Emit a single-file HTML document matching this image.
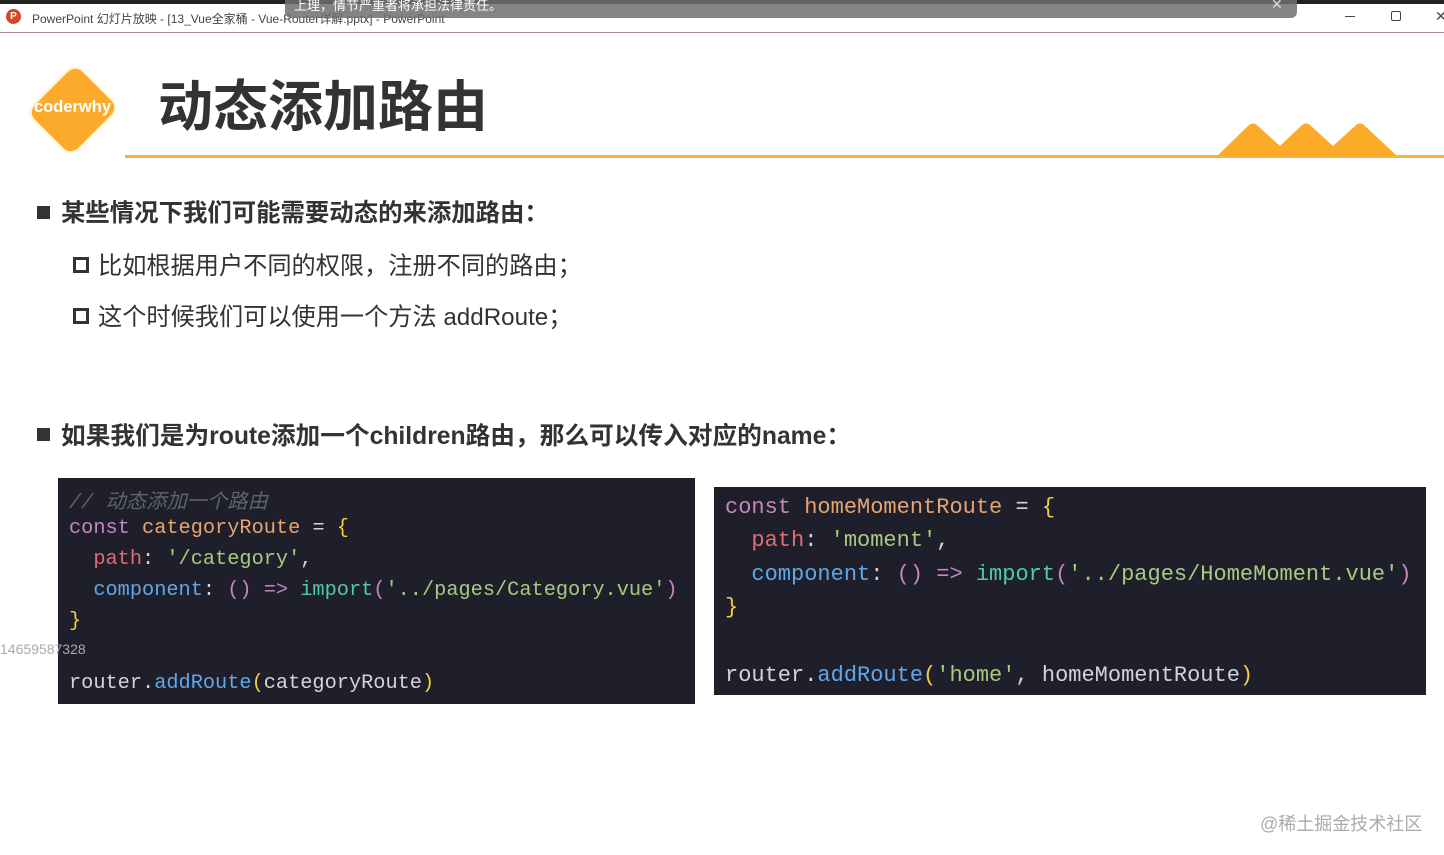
<!DOCTYPE html>
<html><head><meta charset="utf-8"><style>
*{margin:0;padding:0;box-sizing:border-box}
body{width:1444px;height:855px;background:#fff;position:relative;overflow:hidden;font-family:"Liberation Sans","Noto Sans CJK SC",sans-serif}
.abs{position:absolute;white-space:nowrap}
.code{font-family:"Liberation Mono","DejaVu Sans Mono",monospace;position:absolute;background:#1e1f2b;}
.code div{position:absolute;white-space:pre;left:11px}
.k{color:#c586c0}.v{color:#e5a56e}.y{color:#f3d038}.p{color:#e06c75}.b{color:#5fa8e8}.s{color:#a8c97f}.w{color:#d4d4d4}.c{color:#5f6370;font-style:italic}.t{color:#4ec9b0}.g{color:#777}
</style></head><body>
<div class="abs" style="left:0;top:0;width:1444px;height:4px;background:#222"></div>
<div class="abs" style="left:0;top:32px;width:1444px;height:1px;background:#b08a8a"></div>
<div class="abs" style="left:6px;top:9px;width:15px;height:15px;border-radius:50%;background:#d24726;color:#fff;font-size:10px;font-weight:bold;text-align:center;line-height:15px">P</div>
<div class="abs" style="left:32px;top:10px;font-size:12px;color:#444">PowerPoint 幻灯片放映 - [13_Vue全家桶 - Vue-Router详解.pptx] - PowerPoint</div>
<div class="abs" style="left:285px;top:0;width:1012px;height:18px;background:rgba(110,110,110,.85);border-radius:0 0 6px 6px"></div>
<div class="abs" style="left:294px;top:-5px;font-size:13px;color:#fff">上理，情节严重者将承担法律责任。</div>
<div class="abs" style="left:1271px;top:-4px;font-size:14px;color:#ddd">✕</div>
<div class="abs" style="left:1345px;top:16px;width:10px;height:1px;background:#444"></div>
<div class="abs" style="left:1391px;top:11px;width:10px;height:10px;border:1px solid #444;border-radius:2px"></div>
<div class="abs" style="left:1435px;top:8px;font-size:14px;color:#444">✕</div>
<div class="abs" style="left:41px;top:78px;width:64px;height:64px;background:#fcaa2c;transform:rotate(45deg) scale(0.95,1.05);border-radius:10px;box-shadow:0 0 4px #fdd77a"></div>
<div class="abs" style="left:34px;top:98px;font-size:16.5px;font-weight:bold;color:#fff">coderwhy</div>
<div class="abs" style="left:158px;top:62px;font-size:55px;font-weight:bold;color:#333">动态添加路由</div>
<div class="abs" style="left:125px;top:155px;width:1319px;height:3px;background:#fbb040"></div>
<svg class="abs" style="left:1210px;top:118px" width="200" height="40"><path d="M7 38 L38 8 Q43 3 48 8 L70 28 L91 8 Q96 3 101 8 L123 28 L145 8 Q150 3 155 8 L187 38 Z" fill="#fbab27"/></svg>
<div class="abs" style="left:37px;top:206px;width:13px;height:13px;background:#333"></div>
<div class="abs" style="left:61px;top:194px;font-size:24.4px;font-weight:bold;color:#333">某些情况下我们可能需要动态的来添加路由：</div>
<div class="abs" style="left:73px;top:257px;width:16px;height:16px;border:3px solid #333"></div>
<div class="abs" style="left:98px;top:246px;font-size:24.2px;color:#333">比如根据用户不同的权限，注册不同的路由；</div>
<div class="abs" style="left:73px;top:308px;width:16px;height:16px;border:3px solid #333"></div>
<div class="abs" style="left:98px;top:297px;font-size:24.2px;color:#333">这个时候我们可以使用一个方法 addRoute；</div>
<div class="abs" style="left:37px;top:428px;width:13px;height:13px;background:#333"></div>
<div class="abs" style="left:61px;top:416px;font-size:24.7px;font-weight:bold;color:#333">如果我们是为route添加一个children路由，那么可以传入对应的name：</div>
<div class="code" style="left:58px;top:478px;width:637px;height:226px;font-size:20.3px">
<div class="c" style="top:6px">// 动态添加一个路由</div>
<div style="top:39px"><span class="k">const</span> <span class="v">categoryRoute</span> <span class="w">=</span> <span class="y">{</span></div>
<div style="top:70px">  <span class="p">path</span><span class="w">:</span> <span class="s">'/category'</span><span class="w">,</span></div>
<div style="top:101px">  <span class="b">component</span><span class="w">:</span> <span class="k">()</span> <span class="k">=&gt;</span> <span class="t">import</span><span class="k">(</span><span class="s">'../pages/Category.vue'</span><span class="k">)</span></div>
<div style="top:132px"><span class="y">}</span></div>
<div style="top:194px"><span class="w">router.</span><span class="b">addRoute</span><span class="y">(</span><span class="w">categoryRoute</span><span class="y">)</span></div>
</div>
<div class="abs" style="left:0;top:641px;font-size:14px;color:#aaa">14659587328</div>
<div class="code" style="left:714px;top:487px;width:712px;height:208px;font-size:22px">
<div style="top:8px"><span class="k">const</span> <span class="v">homeMomentRoute</span> <span class="w">=</span> <span class="y">{</span></div>
<div style="top:41px">  <span class="p">path</span><span class="w">:</span> <span class="s">'moment'</span><span class="w">,</span></div>
<div style="top:75px">  <span class="b">component</span><span class="w">:</span> <span class="k">()</span> <span class="k">=&gt;</span> <span class="t">import</span><span class="k">(</span><span class="s">'../pages/HomeMoment.vue'</span><span class="k">)</span></div>
<div style="top:108px"><span class="y">}</span></div>
<div style="top:176px"><span class="w">router.</span><span class="b">addRoute</span><span class="y">(</span><span class="s">'home'</span><span class="w">, homeMomentRoute</span><span class="y">)</span></div>
</div>
<div class="abs" style="left:1260px;top:810px;font-size:18px;color:#aaa">@稀土掘金技术社区</div>
</body></html>
